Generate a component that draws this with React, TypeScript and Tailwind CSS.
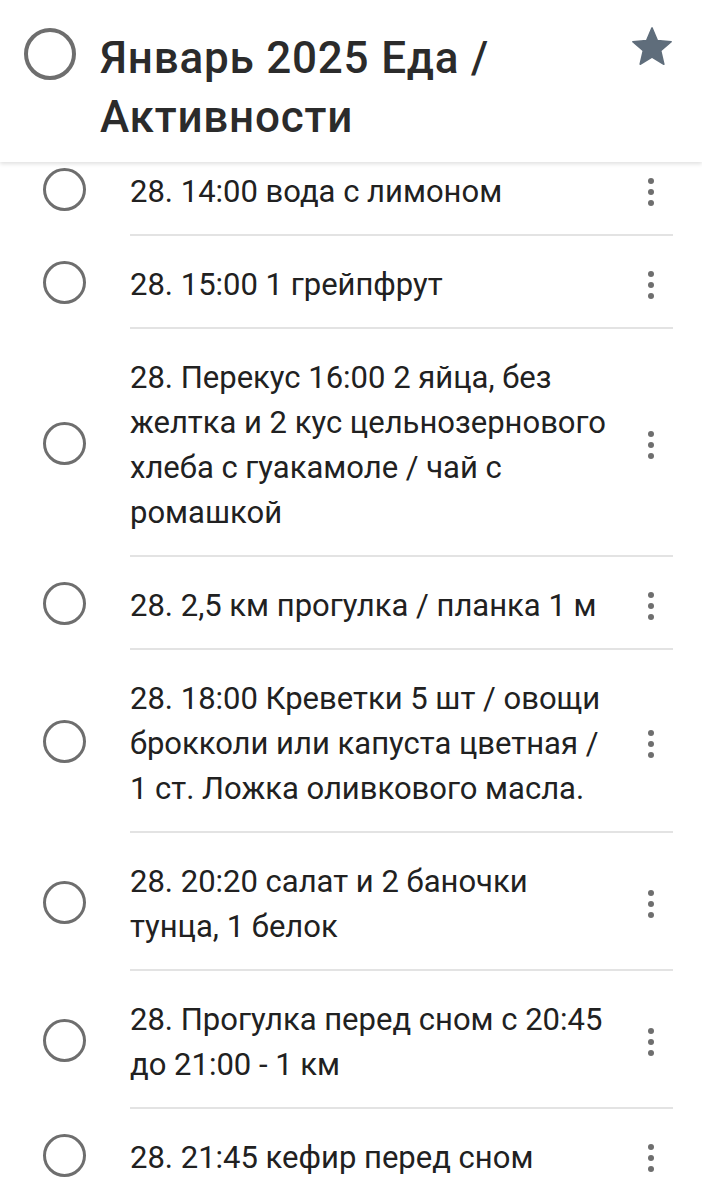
import React from 'react';

const items: string[][] = [
  ['28. 14:00 вода с лимоном'],
  ['28. 15:00 1 грейпфрут'],
  ['28. Перекус 16:00 2 яйца, без', 'желтка и 2 кус цельнозернового', 'хлеба с гуакамоле / чай с', 'ромашкой'],
  ['28. 2,5 км прогулка / планка 1 м'],
  ['28. 18:00 Креветки 5 шт / овощи', 'брокколи или капуста цветная /', '1 ст. Ложка оливкового масла.'],
  ['28. 20:20 салат и 2 баночки', 'тунца, 1 белок'],
  ['28. Прогулка перед сном с 20:45', 'до 21:00 - 1 км'],
  ['28. 21:45 кефир перед сном'],
];

function Dots() {
  return (
    <div className="flex flex-col gap-[5px] items-center">
      <span className="w-[6px] h-[6px] rounded-full bg-[#6e6e6e]" />
      <span className="w-[6px] h-[6px] rounded-full bg-[#6e6e6e]" />
      <span className="w-[6px] h-[6px] rounded-full bg-[#6e6e6e]" />
    </div>
  );
}

export default function App() {
  return (
    <div className="w-[702px] h-[1200px] overflow-hidden bg-white text-[#212121] flex flex-col" style={{ fontFamily: 'Roboto, "Noto Sans", sans-serif' }}>
      {/* Header */}
      <div className="relative z-10 h-[162px] shrink-0 bg-white shadow-[0_2px_4px_rgba(0,0,0,0.12)] flex items-start">
        <div className="ml-[24px] mt-[28px] w-[52px] h-[52px] rounded-full border-[4px] border-[#6e6e6e] shrink-0" />
        <h1 className="ml-[24px] mt-[29px] flex-1 text-[44px] leading-[59px] font-medium tracking-[0.8px] text-[#2b2b2b]">
          Январь 2025 Еда /<br />Активности
        </h1>
        <svg className="mr-[27px] mt-[24px] w-[46px] h-[46px] shrink-0" viewBox="0 0 24 24">
          <path
            d="M12 17.27L18.18 21l-1.64-7.03L22 9.24l-7.19-.61L12 2 9.19 8.63 2 9.24l5.46 4.73L5.82 21z"
            fill="#5f6d7b"
            stroke="#5f6d7b"
            strokeWidth="0.8"
            strokeLinejoin="round"
          />
        </svg>
      </div>

      {/* List */}
      <div className="-mt-[19px] flex flex-col">
        {items.map((lines, i) => (
          <div key={i} className="flex items-center">
            <div className="w-[130px] shrink-0 flex justify-start pl-[43px]">
              <div className="w-[43px] h-[43px] rounded-full border-[3px] border-[#6e6e6e]" />
            </div>
            <div className="flex-1 flex items-center border-b-2 border-[#e3e3e3] mr-[29px] pt-[26px] pb-[20px]">
              <p className="flex-1 text-[31px] leading-[45px]">
                {lines.map((l, j) => (
                  <span key={j} className="block whitespace-nowrap">{l}</span>
                ))}
              </p>
              <div className="w-[44px] flex justify-center">
                <Dots />
              </div>
            </div>
          </div>
        ))}
      </div>
    </div>
  );
}
